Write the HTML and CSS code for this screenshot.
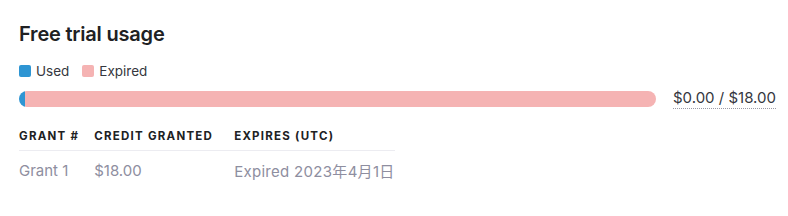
FILE: index.html
```html
<!DOCTYPE html>
<html>
<head lang="en">
    <meta charset="UTF-8">
    <title>Free trial usage</title>
    <link rel="stylesheet" href="styles.css">
</head>
<body>
    <div class="usage">
        <h2 class="title">Free trial usage</h2>
        <div class="legend">
            <span class="key"><i class="dot used"></i>Used</span>
            <span class="key"><i class="dot expired"></i>Expired</span>
        </div>
        <div class="meter">
            <div class="bar">
                <div class="seg used" style="width:1%"></div>
                <div class="seg expired" style="width:99%"></div>
            </div>
            <span class="amount">$0.00 / $18.00</span>
        </div>
        <table class="grants">
            <thead>
                <tr><th>Grant #</th><th>Credit granted</th><th>Expires (UTC)</th></tr>
            </thead>
            <tbody>
                <tr><td>Grant 1</td><td>$18.00</td><td>Expired 2023年4月1日</td></tr>
            </tbody>
        </table>
    </div>
</body>
</html>
```

FILE: styles.css
```css
body{margin:0;background:#fff;color:#202123;font-family:Inter,"Noto Sans CJK JP",sans-serif;}
.usage{padding:19px 10px 0 19px;}
.title{margin:0;font-size:20px;font-weight:600;line-height:30px;letter-spacing:-0.2px;}
.legend{display:flex;gap:13px;margin-top:13px;font-size:13.5px;line-height:18px;color:#353740;}
.key{display:flex;align-items:center;}
.dot{display:inline-block;width:12px;height:12px;border-radius:2px;margin-right:5px;}
.dot.used,.seg.used{background:#2e95d3;}
.dot.expired,.seg.expired{background:#f5b3b3;}
.meter{display:flex;align-items:center;margin-top:8px;}
.bar{display:flex;width:637px;height:16px;border-radius:8px;overflow:hidden;}
.seg{height:100%;}
.amount{margin-left:17px;font-size:15px;line-height:20px;color:#353740;border-bottom:1px dotted #9a9aa5;}
.grants{border-collapse:collapse;margin-top:14px;}
.grants th{text-align:left;font-size:11.5px;font-weight:700;text-transform:uppercase;letter-spacing:1.25px;padding:6px 15px 7px 0;border-bottom:1px solid #ececf1;color:#202123;}
.grants td{font-size:15px;color:#8e8ea0;padding:9px 15px 8px 0;}
.grants th:nth-child(2),.grants td:nth-child(2){padding-right:21px;}
.grants td:nth-child(3){letter-spacing:0.3px;}
.grants th:last-child,.grants td:last-child{padding-right:0;}
```
